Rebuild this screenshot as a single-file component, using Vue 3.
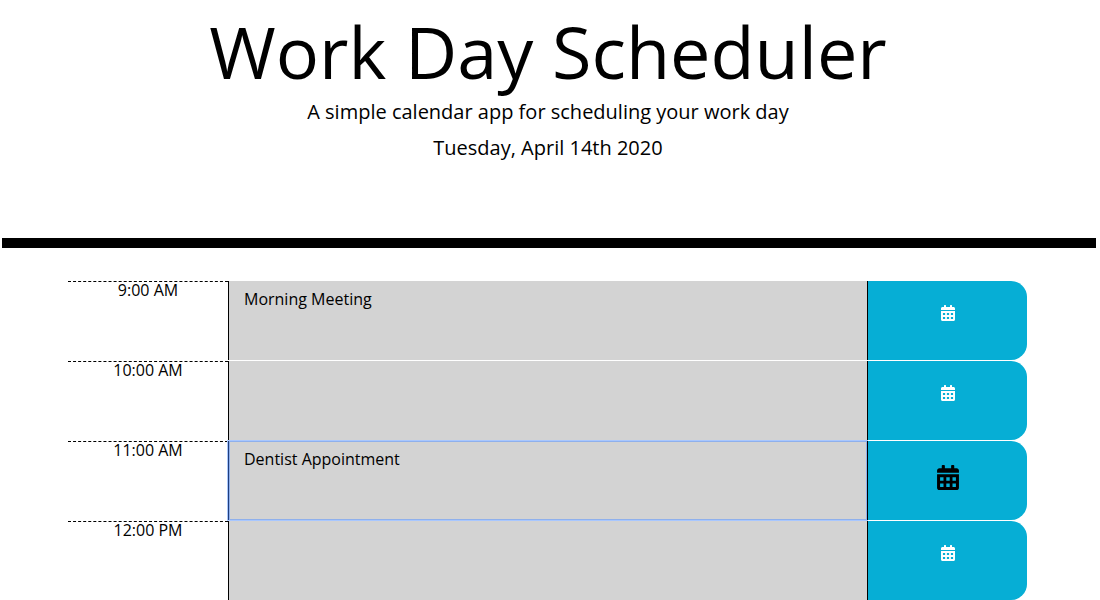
<script setup>
import { ref } from 'vue'

const slots = ref([
  { id: 'h9', label: '9:00 AM', text: 'Morning Meeting', active: false },
  { id: 'h10', label: '10:00 AM', text: '', active: false },
  { id: 'h11', label: '11:00 AM', text: 'Dentist Appointment', active: true },
  { id: 'h12', label: '12:00 PM', text: '', active: false },
])
</script>

<template>
  <div class="page">
    <header class="banner">
      <h1>Work Day Scheduler</h1>
      <p>A simple calendar app for scheduling your work day</p>
      <p>Tuesday, April 14th 2020</p>
    </header>
    <main class="schedule">
      <div v-for="slot in slots" :key="slot.id" class="slot" :class="{ active: slot.active }">
        <label class="hour" :for="slot.id">{{ slot.label }}</label>
        <textarea :id="slot.id" v-model="slot.text" class="entry" spellcheck="false"></textarea>
        <button class="save" type="button" :aria-label="`Save ${slot.label}`">
          <svg class="icon" viewBox="0 0 448 512" aria-hidden="true">
            <path
              fill="currentColor"
              fill-rule="evenodd"
              d="M400 64h-48V16c0-8.8-7.2-16-16-16h-32c-8.8 0-16 7.2-16 16v48H160V16c0-8.8-7.2-16-16-16h-32c-8.8 0-16 7.2-16 16v48H48C21.5 64 0 85.500 0 112v48h448v-48c0-26.5-21.5-48-48-48zM0 188v276c0 26.5 21.5 48 48 48h352c26.5 0 48-21.5 48-48V188zM62 252h70v70H62zM189 252h70v70h-70zM316 252h70v70h-70zM62 380h70v70H62zM189 380h70v70h-70zM316 380h70v70h-70z"
            />
          </svg>
        </button>
      </div>
    </main>
  </div>
</template>

<style>
body {
  margin: 0;
  overflow: hidden;
  background: #fff;
}
</style>

<style scoped>
.page {
  color: #000;
  font-family: "Open Sans", "Noto Sans", sans-serif;
  font-size: 16px;
  line-height: 24px;
}

.banner {
  margin: 0 4px 0 2px;
  padding: 8px 24px 69px 22px;
  border-bottom: 10px solid #000;
  text-align: center;
}

h1 {
  margin: 0 0 3px;
  font-size: 72px;
  font-weight: 400;
  line-height: 86px;
}

p {
  margin: 0 0 6px;
  font-size: 20px;
  font-weight: 400;
  line-height: 30px;
}

.schedule {
  max-width: 959px;
  margin: 33px auto 0;
  padding-right: 5px;
}

.slot {
  display: grid;
  grid-template-columns: 160px 1fr 160px;
  min-height: 79px;
  margin-bottom: 1px;
}

.hour {
  border-top: 1px dashed #000;
  line-height: 16px;
  text-align: center;
}

.entry {
  box-sizing: border-box;
  min-width: 0;
  height: 79px;
  margin: 0;
  padding: 6px 15px;
  border: 0;
  border-left: 1px solid #000;
  border-radius: 0;
  outline: 0;
  background: #d3d3d3;
  color: #000;
  font: inherit;
  resize: none;
}

.active .entry {
  border-left-color: #1f3d7a;
  box-shadow: 0 0 0 1px #a8c7ff, inset 0 0 0 1px #8fb0ec;
}

.save {
  display: flex;
  align-items: flex-start;
  justify-content: center;
  position: relative;
  box-sizing: border-box;
  padding: 24px 0 0 1px;
  border: 0;
  border-left: 1px solid #000;
  border-radius: 0 16px 16px 0;
  background: #06aed5;
  color: #fff;
}

.icon {
  width: 14px;
  height: 16px;
}

.active .save {
  color: #000;
}

.active .icon {
  width: 22px;
  height: 25px;
}
</style>
